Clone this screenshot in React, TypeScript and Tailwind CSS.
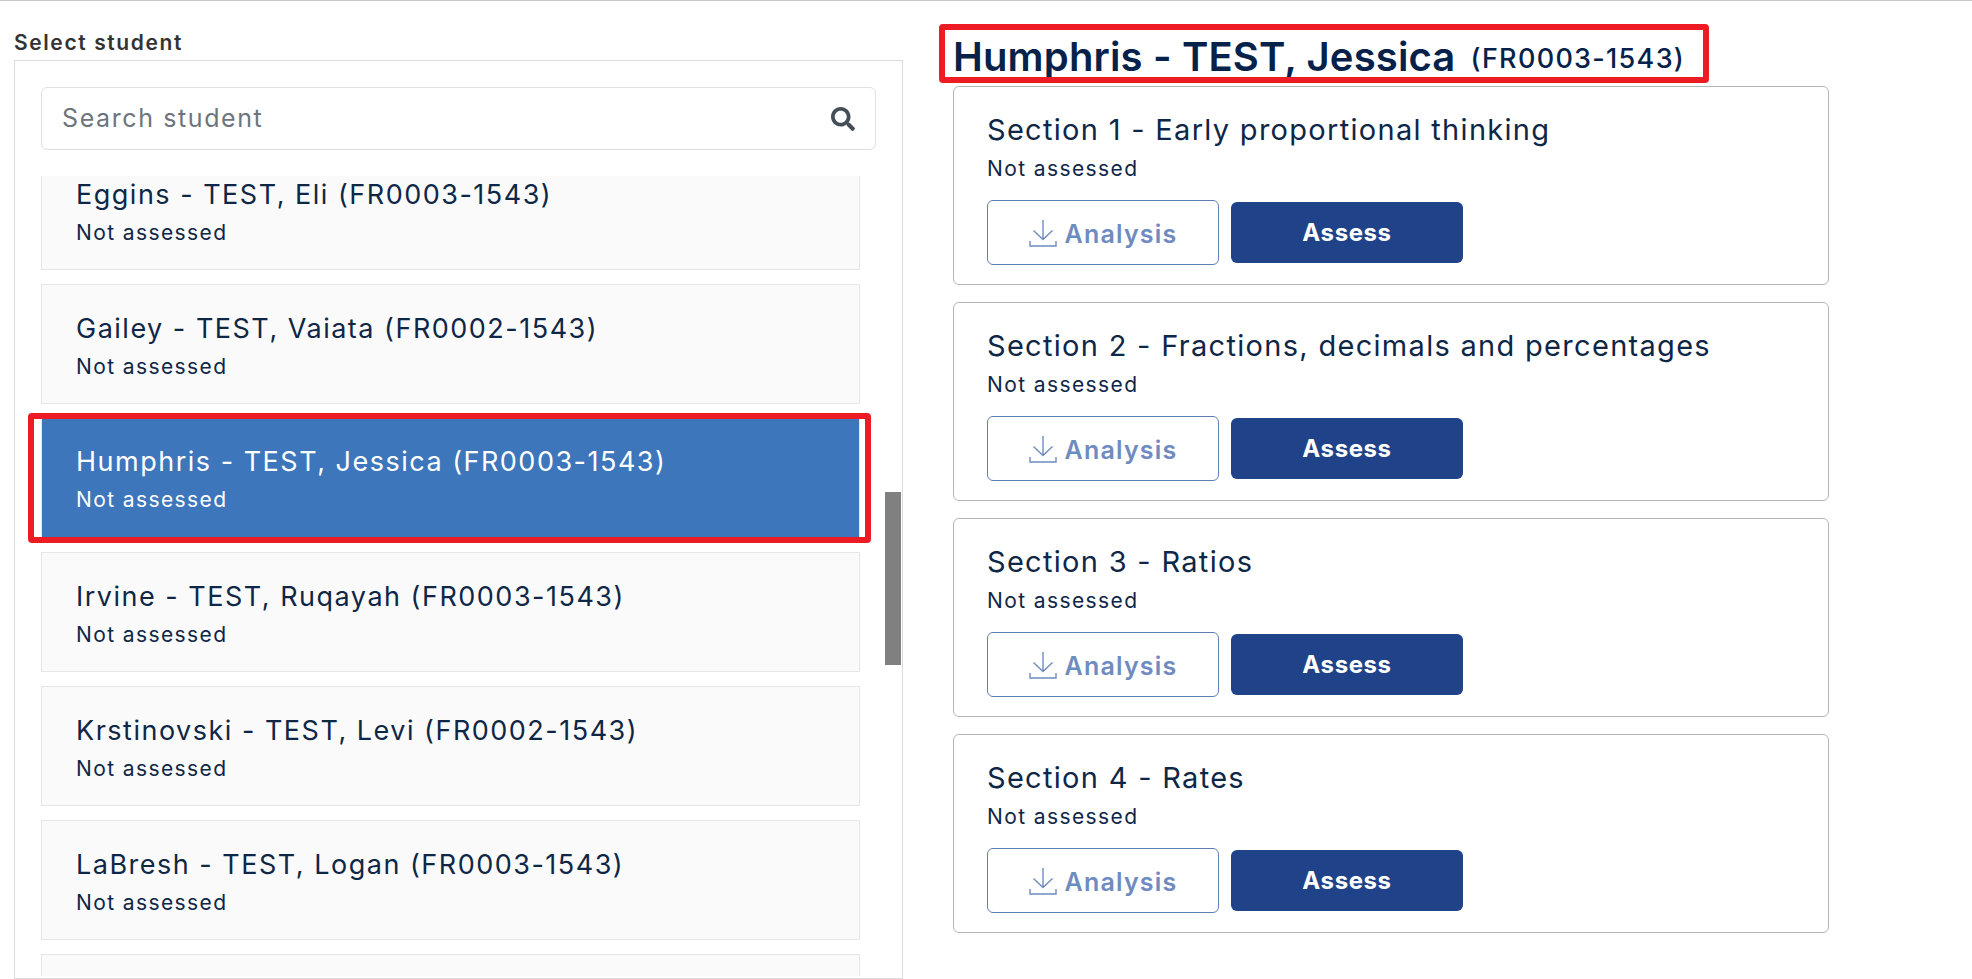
import React from "react";
import { FaSearch } from "react-icons/fa";

const students = [
  "Eggins - TEST, Eli (FR0003-1543)",
  "Gailey - TEST, Vaiata (FR0002-1543)",
  "Humphris - TEST, Jessica (FR0003-1543)",
  "Irvine - TEST, Ruqayah (FR0003-1543)",
  "Krstinovski - TEST, Levi (FR0002-1543)",
  "LaBresh - TEST, Logan (FR0003-1543)",
  "",
];
const sections = [
  "Section 1 - Early proportional thinking",
  "Section 2 - Fractions, decimals and percentages",
  "Section 3 - Ratios",
  "Section 4 - Rates",
];

function DownloadIcon() {
  return (
    <svg width="28" height="30" viewBox="0 0 28 30" fill="none" stroke="#6f8bc0" strokeWidth="1.4" className="mr-[8px] shrink-0">
      <path d="M14 2V21M4.5 12.5L14 21.5L23.5 12.5M1 23V28H27V23" />
    </svg>
  );
}

export default function App() {
  return (
    <div className="h-[979px] w-[1972px] overflow-hidden border-t border-[#c8c8c8] bg-white font-['Inter',sans-serif] text-[#0f2747]">
      <div className="flex pl-[14px]">
        <div className="w-[889px] shrink-0">
          <div className="flex h-[59px] items-end pb-[4px] text-[21px] font-semibold leading-[26px] tracking-[1.6px] text-[#333333]">Select student</div>
          <div className="relative h-[919px] border border-[#dcdcdc] pl-[26px] pt-[26px]">
            <div className="flex h-[63px] w-[835px] items-center justify-between rounded-[6px] border border-[#e0e0e0] bg-white pl-[20px] pr-[20px]">
              <span className="text-[25px] tracking-[1.6px] text-[#6c757d]">Search student</span>
              <FaSearch size={24} color="#454f58" />
            </div>
            <div className="mt-[26px] flex h-[800px] overflow-hidden">
              <div className="-mt-[26px] flex w-[819px] shrink-0 flex-col gap-[14px]">
                {students.map((s, i) => (
                  <div key={i} className={i === 2
                    ? "h-[120px] shrink-0 border-x border-[#e6e6e6] bg-[#3d76bb] pl-[34px] pt-[27px] text-white"
                    : "h-[120px] shrink-0 border border-[#e6e6e6] bg-[#fafafa] pl-[34px] pt-[27px]"}>
                    {s && <div className="text-[27px] leading-[34px] tracking-[1.5px]">{s}</div>}
                    {s && <div className="mt-[7px] text-[21px] leading-[28px] tracking-[1.4px]">Not assessed</div>}
                  </div>
                ))}
              </div>
              <div className="ml-[25px] mt-[316px] h-[173px] w-[16px] shrink-0 bg-[#808080]" />
            </div>
            <div className="absolute left-[13px] top-[352px] h-[130px] w-[843px] rounded-[4px] border-[6px] border-[#ed1c24]" />
          </div>
        </div>
        <div className="ml-[50px] w-[876px] shrink-0">
          <div className="relative flex h-[85px] items-end gap-[15px] pb-[4px]">
            <span className="text-[40px] font-semibold leading-[50px] tracking-[0.15px] text-[#06224a]">Humphris - TEST, Jessica</span>
            <span className="pb-[6px] text-[27px] font-medium leading-[34px] tracking-[1.3px] text-[#06224a]">(FR0003-1543)</span>
            <div className="absolute -left-[14px] top-[23px] h-[59px] w-[770px] rounded-[4px] border-[6px] border-[#ed1c24]" />
          </div>
          <div className="flex flex-col gap-[17px]">
            {sections.map((t) => (
              <div key={t} className="h-[199px] rounded-[6px] border border-[#b5b5b5] pl-[33px] pt-[24px]">
                <div className="text-[29px] leading-[38px] tracking-[1.3px]">{t}</div>
                <div className="mt-[6px] text-[21px] leading-[28px] tracking-[1.4px]">Not assessed</div>
                <div className="mt-[17px] flex items-center gap-[12px]">
                  <div className="flex h-[65px] w-[232px] items-center justify-center rounded-[6px] border border-[#5f7fb5] text-[25px] font-semibold tracking-[1.2px] text-[#6f8bc0]">
                    <DownloadIcon /><span className="pt-[4px]">Analysis</span>
                  </div>
                  <div className="flex h-[61px] w-[232px] items-center justify-center rounded-[6px] bg-[#1f4289] text-[24px] font-bold tracking-[0.6px] text-white">Assess</div>
                </div>
              </div>
            ))}
          </div>
        </div>
      </div>
    </div>
  );
}
